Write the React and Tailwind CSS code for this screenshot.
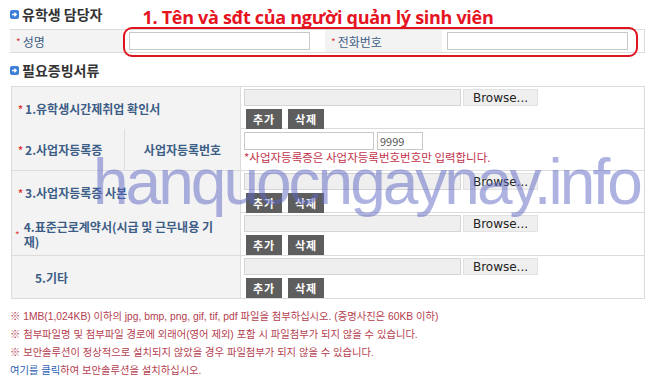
import React from 'react'

const kr = { fontFamily: '"Noto Sans CJK KR", "Noto Sans", sans-serif' }

const Bullet = () => (
  <span className="inline-flex h-[9px] w-[9px] items-center justify-center rounded-[2px] bg-[#3b7fd6]">
    <svg width="7" height="7" viewBox="0 0 7 7">
      <path d="M1 3.5h4M3.4 1.6 5.3 3.5 3.4 5.4" stroke="#fff" strokeWidth="1.3" fill="none" />
    </svg>
  </span>
)

const Star = () => <span className="mr-[2px] text-[10px] text-[#e03a3a]">*</span>

const Label = ({ children, star = true, className = '' }) => (
  <div className={`flex items-center bg-[#f3f3f3] pl-[6px] text-[12px] font-bold leading-[15px] text-[#3c5d86] ${className}`}>
    {star && <Star />}
    <span>{children}</span>
  </div>
)

const GrayBtn = ({ children }) => (
  <span className="flex h-[20px] w-[36px] items-center justify-center bg-[#5e5e5e] text-[11px] font-bold tracking-[1px] text-white">
    {children}
  </span>
)

const FileCell = () => (
  <div className="flex flex-col gap-[3px] pl-[3px] pt-[2px]">
    <div className="flex items-center gap-[2px]">
      <div className="h-[17px] w-[217px] border border-[#d4d4d4] bg-[#efefef]" />
      <div className="flex h-[17px] w-[75px] items-center justify-center border border-[#e2e2e2] bg-[#efefef] text-[12px] text-[#222]" style={{ fontFamily: '"DejaVu Sans", sans-serif' }}>
        Browse...
      </div>
    </div>
    <div className="flex gap-[6px] pl-[2px]">
      <GrayBtn>추가</GrayBtn>
      <GrayBtn>삭제</GrayBtn>
    </div>
  </div>
)

export default function App() {
  return (
    <div className="relative h-[383px] w-[656px] overflow-hidden bg-white" style={kr}>
      <div className="flex items-start pl-[10px] pt-[4px]">
        <div className="flex items-center gap-[3px] pt-[1px] text-[14px] font-bold leading-[18px] text-[#333]">
          <Bullet />
          <span>유학생 담당자</span>
        </div>
        <span className="ml-[40px] text-[18px] font-bold leading-[26px] tracking-[-0.3px] text-[#e5141f]" style={{ fontFamily: '"Open Sans", sans-serif' }}>
          1. Tên và sđt của người quản lý sinh viên
        </span>
      </div>

      <div className="relative ml-[10px] mt-[-1px] grid h-[24px] w-[635px] grid-cols-[113px_202px_117px_1fr] border-y border-[#dcdcdc]">
        <Label className="font-normal">성명</Label>
        <div className="flex items-center pl-[6px]">
          <div className="h-[18px] w-[181px] border border-[#c8c8c8] bg-white" />
        </div>
        <Label className="font-normal">전화번호</Label>
        <div className="flex items-center border-r border-[#dcdcdc] pl-[5px]">
          <div className="h-[18px] w-[181px] border border-[#c8c8c8] bg-white" />
        </div>
        <div className="absolute left-[113px] top-[-3px] h-[30px] w-[515px] rounded-[9px] border-2 border-[#e0141e]" />
      </div>

      <div className="mt-[7px] flex items-center gap-[3px] pl-[10px] text-[14px] font-bold text-[#333]">
        <Bullet />
        <span>필요증빙서류</span>
      </div>

      <div className="ml-[11px] mt-[5px] w-[634px] border border-[#dcdcdc] [&>div]:border-b [&>div]:border-[#dcdcdc] [&>div:last-child]:border-b-0">
        <div className="grid h-[42px] grid-cols-[229px_1fr]">
          <Label className="border-r border-[#dcdcdc]">1.유학생시간제취업 확인서</Label>
          <FileCell />
        </div>
        <div className="grid h-[42px] grid-cols-[113px_116px_1fr]">
          <Label className="border-r border-[#dcdcdc]">2.사업자등록증</Label>
          <div className="flex items-center justify-center border-r border-[#dcdcdc] bg-[#f3f3f3] text-[12px] font-bold text-[#3c5d86]">
            사업자등록번호
          </div>
          <div className="flex flex-col pl-[3px] pt-[3px]">
            <div className="flex gap-[3px]">
              <div className="h-[18px] w-[130px] border border-[#c8c8c8]" />
              <div className="flex h-[18px] w-[46px] items-center border border-[#c8c8c8] pl-[2px] text-[11px] text-[#555]">9999</div>
            </div>
            <span className="text-[11.5px] leading-[15px] text-[#c2334c]">*사업자등록증은 사업자등록번호번호만 입력합니다.</span>
          </div>
        </div>
        <div className="grid h-[42px] grid-cols-[229px_1fr]">
          <Label className="border-r border-[#dcdcdc]">3.사업자등록증 사본</Label>
          <FileCell />
        </div>
        <div className="grid h-[43px] grid-cols-[229px_1fr]">
          <div className="flex items-center border-r border-[#dcdcdc] bg-[#f3f3f3] pl-[3px]">
            <Star />
            <span className="w-[200px] break-all pl-[2px] text-[12px] font-bold leading-[15px] text-[#3c5d86]">4.표준근로계약서(시급 및 근무내용 기재)</span>
          </div>
          <FileCell />
        </div>
        <div className="grid h-[42px] grid-cols-[229px_1fr]">
          <Label star={false} className="border-r border-[#dcdcdc] pl-[23px]">5.기타</Label>
          <FileCell />
        </div>
      </div>

      <div
        className="mt-[9px] pl-[10px] text-[10.3px] leading-[18px] text-[#b4404f]"
        style={{ fontFamily: '"Liberation Sans", "Noto Sans CJK KR", sans-serif' }}
      >
        <p>※ 1MB(1,024KB) 이하의 jpg, bmp, png, gif, tif, pdf 파일을 첨부하십시오. (증명사진은 60KB 이하)</p>
        <p>※ 첨부파일명 및 첨부파일 경로에 외래어(영어 제외) 포함 시 파일첨부가 되지 않을 수 있습니다.</p>
        <p>※ 보안솔루션이 정상적으로 설치되지 않았을 경우 파일첨부가 되지 않을 수 있습니다.</p>
        <p><span className="text-[#2d5fb5]">여기를 클릭</span>하여 보안솔루션을 설치하십시오.</p>
      </div>

      <div
        className="pointer-events-none absolute left-[93px] top-[150px] text-[64px] leading-none tracking-[-3px] text-[#5b66c4]/50"
        style={{ fontFamily: '"Liberation Sans", sans-serif' }}
      >
        hanquocngaynay.info
      </div>
    </div>
  )
}
